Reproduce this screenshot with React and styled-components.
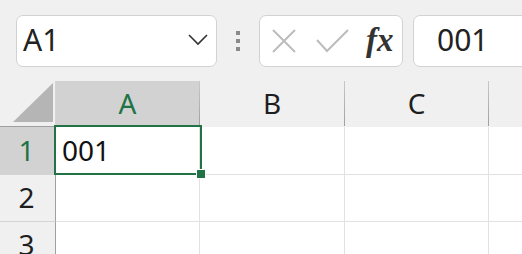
import React from "react"
import styled, { createGlobalStyle } from "styled-components"

const GlobalStyle = createGlobalStyle`
  html, body {
    margin: 0;
    padding: 0;
    background: #f0f0f0;
    overflow: hidden;
    font-family: "Noto Sans", "Open Sans", sans-serif;
  }
`

const columns = ["A", "B", "C", ""]
const rows = [
  { n: "1", h: 48, cells: ["001", "", "", ""] },
  { n: "2", h: 47, cells: ["", "", "", ""] },
  { n: "3", h: 47, cells: ["", "", "", ""] },
]

const App = () => {
  return (
    <Page>
      <GlobalStyle />
      <Toolbar>
        <NameBox>
          <NameText>A1</NameText>
          <svg width="20" height="12" viewBox="0 0 20 12">
            <polyline points="1,1 10,10 19,1" fill="none" stroke="#333" strokeWidth="1.6" />
          </svg>
        </NameBox>
        <Grip>
          <span />
          <span />
          <span />
        </Grip>
        <FxBox>
          <svg width="24" height="24" viewBox="0 0 24 24">
            <path d="M1 1 L23 23 M23 1 L1 23" stroke="#bcbcbc" strokeWidth="2" fill="none" />
          </svg>
          <svg width="33" height="24" viewBox="0 0 33 24">
            <polyline points="1,11 11,22 32,1" fill="none" stroke="#bcbcbc" strokeWidth="2" />
          </svg>
          <FxLabel>fx</FxLabel>
        </FxBox>
        <FormulaBox>001</FormulaBox>
      </Toolbar>

      <Sheet>
        <Corner>
          <svg width="40" height="39" viewBox="0 0 40 39">
            <polygon points="0,39 40,0 40,39" fill="#b5b5b5" />
          </svg>
        </Corner>
        {columns.map((c, i) => (
          <ColHeader key={i} $active={c === "A"}>{c}</ColHeader>
        ))}
        {rows.map((r) => (
          <React.Fragment key={r.n}>
            <RowHeader $active={r.n === "1"} style={{ height: r.h }}>{r.n}</RowHeader>
            {r.cells.map((v, j) => (
              <Cell key={j} $selected={r.n === "1" && j === 0}>
                {v}
                {r.n === "1" && j === 0 && (
                  <Selection>
                    <FillHandle />
                  </Selection>
                )}
              </Cell>
            ))}
          </React.Fragment>
        ))}
      </Sheet>
    </Page>
  )
}

export default App

const Page = styled.div`
  width: 522px;
  height: 254px;
  overflow: hidden;
  background: #f0f0f0;
`

const Toolbar = styled.div`
  display: flex;
  align-items: center;
  height: 81px;
  padding-left: 16px;
  box-sizing: border-box;
  white-space: nowrap;
`

const NameBox = styled.div`
  display: flex;
  align-items: center;
  justify-content: space-between;
  width: 201px;
  height: 52px;
  box-sizing: border-box;
  padding: 0 8px 2px 6px;
  background: #fff;
  border: 1px solid #d2d2d2;
  border-radius: 7px;
  flex-shrink: 0;
`

const NameText = styled.span`
  font-size: 30px;
  color: #222;
  line-height: 1;
`

const Grip = styled.div`
  display: flex;
  flex-direction: column;
  gap: 4px;
  margin: 0 19px;
  flex-shrink: 0;

  span {
    display: block;
    width: 4px;
    height: 4px;
    background: #8a8a8a;
  }
`

const FxBox = styled.div`
  display: flex;
  align-items: center;
  width: 144px;
  height: 52px;
  box-sizing: border-box;
  padding-left: 12px;
  gap: 20px;
  background: #fff;
  border: 1px solid #d2d2d2;
  border-radius: 7px;
  flex-shrink: 0;
`

const FxLabel = styled.span`
  font-family: "Liberation Serif", "DejaVu Serif", serif;
  font-style: italic;
  font-weight: bold;
  font-size: 33px;
  color: #333;
  margin-left: -3px;
  line-height: 1;
`

const FormulaBox = styled.div`
  display: flex;
  align-items: center;
  width: 140px;
  height: 52px;
  margin-left: 10px;
  box-sizing: border-box;
  padding: 0 0 2px 23px;
  font-size: 30px;
  color: #222;
  background: #fff;
  border: 1px solid #d2d2d2;
  border-radius: 7px;
  flex-shrink: 0;
`

const Sheet = styled.div`
  display: grid;
  grid-template-columns: 56px 144px 145px 144px 60px;
  grid-auto-rows: auto;
`

const Corner = styled.div`
  height: 46px;
  display: flex;
  align-items: flex-end;
  justify-content: flex-end;
  padding: 0 2px 4px 0;
  box-sizing: border-box;
  border-bottom: 1px solid #9f9f9f;
  border-right: 1px solid #d4d4d4;
`

const ColHeader = styled.div`
  height: 46px;
  box-sizing: border-box;
  display: flex;
  align-items: center;
  justify-content: center;
  font-size: 28px;
  padding-bottom: 2px;
  color: ${(p) => (p.$active ? "#217346" : "#1e1e1e")};
  background: ${(p) => (p.$active ? "#d2d2d2" : "#f0f0f0")};
  border-right: 1px solid;
  border-image: linear-gradient(#c8c8c8, #9f9f9f) 1;
  border-image-slice: 0 1 0 0;
  border-bottom: 1px solid #9f9f9f;
`

const RowHeader = styled.div`
  box-sizing: border-box;
  display: flex;
  align-items: center;
  justify-content: center;
  font-size: 28px;
  padding: 0 2px 2px 0;
  color: ${(p) => (p.$active ? "#217346" : "#1e1e1e")};
  background: ${(p) => (p.$active ? "#d2d2d2" : "#f0f0f0")};
  border-right: 1px solid #9f9f9f;
  border-bottom: 1px solid #d4d4d4;
`

const Cell = styled.div`
  position: relative;
  z-index: ${(p) => (p.$selected ? 2 : "auto")};
  box-sizing: border-box;
  display: flex;
  align-items: center;
  padding: 0 0 2px 6px;
  font-size: 28px;
  color: #111;
  background: #fff;
  border-right: 1px solid #e1e1e1;
  border-bottom: 1px solid #e1e1e1;
`

const Selection = styled.div`
  position: absolute;
  left: -2px;
  top: -2px;
  right: -3px;
  bottom: -1px;
  border: 2px solid #217346;
  pointer-events: none;
`

const FillHandle = styled.div`
  position: absolute;
  right: -6px;
  bottom: -6px;
  width: 8px;
  height: 8px;
  background: #217346;
  border: 1px solid #fff;
`
